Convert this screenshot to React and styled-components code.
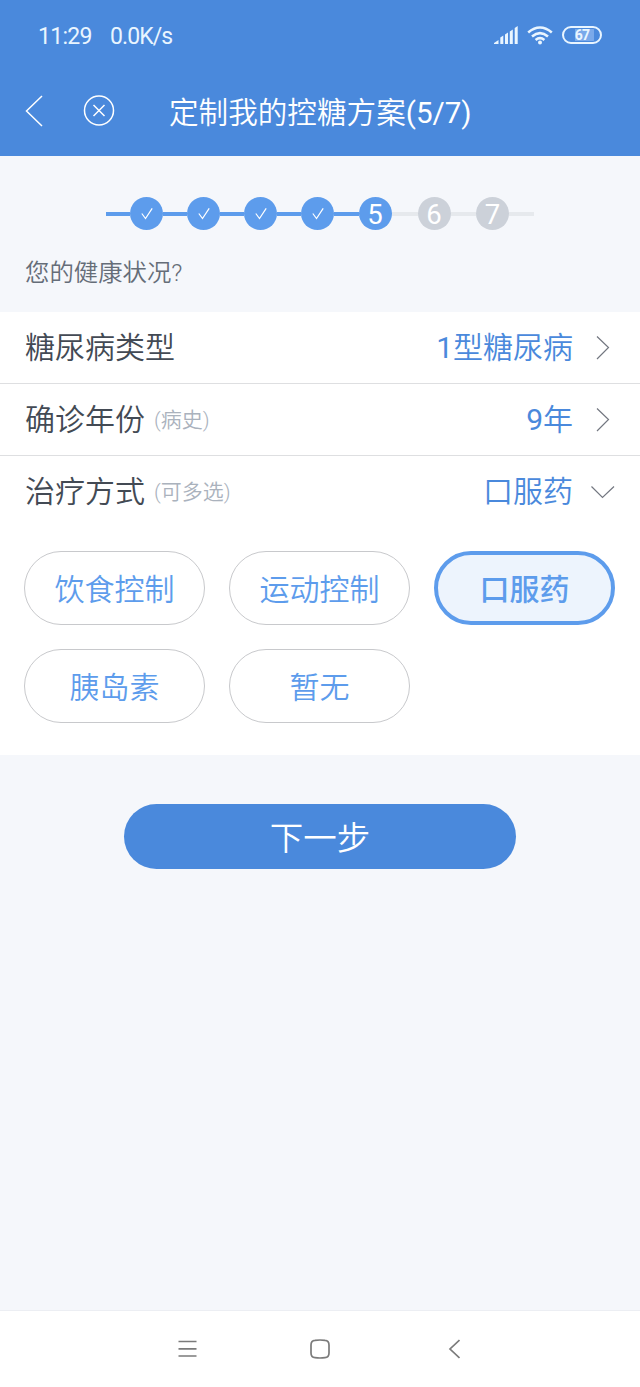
import React, { useState } from 'react';
import styled, { createGlobalStyle, css } from 'styled-components';

const GlobalStyle = createGlobalStyle`
    * {
        box-sizing: border-box;
    }
    body {
        margin: 0;
        background: #f5f7fb;
        font-family: Roboto, 'Noto Sans CJK SC', sans-serif;
        font-weight: 350;
    }
    button {
        padding: 0;
        border: none;
        background: none;
        font: inherit;
        color: inherit;
    }
    svg {
        display: block;
        flex-shrink: 0;
    }
`;

const Page = styled.div`
    display: flex;
    flex-direction: column;
    width: 640px;
    height: 1387px;
    background: #f5f7fb;
`;

const Top = styled.header`
    height: 156px;
    background: #4a89dc;
    color: #fff;
`;

const StatusBar = styled.div`
    display: flex;
    align-items: center;
    height: 70px;
    padding: 0 38px;
    font-size: 23px;
    font-weight: 400;
    letter-spacing: -0.9px;
    color: #e9f5ff;
`;

const Clock = styled.span`
    width: 72px;
    padding-top: 3px;
    letter-spacing: -0.7px;
    line-height: 28px;
`;

const Speed = styled.span`
    flex: 1;
    padding-top: 3px;
    line-height: 28px;
`;

const StatusIcons = styled.div`
    display: flex;
    align-items: center;
    gap: 9px;
    height: 24px;
`;

const Battery = styled.div`
    display: flex;
    align-items: center;
    justify-content: center;
    width: 40px;
    height: 18px;
    border: 2px solid #e9f5ff;
    border-radius: 9px;
    background: linear-gradient(90deg, #4a89dc 0 30%, #7aa9ea 30% 86%, #4a89dc 86%) content-box;
    padding: 1px;
    font-size: 14px;
    font-weight: 700;
    letter-spacing: -0.8px;
    line-height: 14px;
`;

const TitleBar = styled.div`
    display: flex;
    align-items: center;
    height: 82px;
    padding-left: 25px;
`;

const CloseButton = styled.button`
    margin-left: 40px;
`;

const Title = styled.h1`
    margin: 4px 0 0 54px;
    font-size: 29.6px;
    font-weight: 350;
    line-height: 40px;
    white-space: nowrap;
`;

const Digits = styled.span`
    font-weight: 400;
`;

const Steps = styled.div`
    display: flex;
    align-items: center;
    height: 33px;
    margin: 41px 0 0 106px;
`;

const Line = styled.span`
    width: ${(props) => props.$width}px;
    height: 4px;
    background: ${(props) => (props.$active ? '#5d9cec' : '#e6e9ed')};
`;

const Dot = styled.span`
    display: flex;
    align-items: center;
    justify-content: center;
    width: 33px;
    height: 33px;
    padding-top: 1px;
    border-radius: 50%;
    background: ${(props) => (props.$active ? '#5d9cec' : '#ccd1d9')};
    color: #fff;
    font-size: 27.5px;
    font-weight: 400;
    line-height: 33px;
`;

const Question = styled.p`
    height: 36px;
    margin: 25px 0 0 25px;
    font-size: 24.4px;
    line-height: 36px;
    color: #656d78;
`;

const Panel = styled.section`
    height: 443px;
    margin-top: 21px;
    background: #fff;
`;

const Row = styled.div`
    display: flex;
    align-items: center;
    height: ${(props) => props.$height}px;
    padding: 0 25px 0 25px;
    border-bottom: ${(props) => (props.$last ? 'none' : '1px solid #dedfe1')};
    font-size: 30px;
    line-height: 44px;
`;

const Label = styled.span`
    color: #434a54;
`;

const Hint = styled.span`
    margin-left: 9px;
    font-size: 21px;
    color: #aab2bd;
`;

const Value = styled.span`
    margin-left: auto;
    margin-right: 17px;
    color: #4a89dc;
`;

const Options = styled.div`
    display: grid;
    grid-template-columns: repeat(3, 181px);
    grid-auto-rows: 74px;
    gap: 24px;
    padding: 24px 24px 0;
`;

const Option = styled.button`
    padding-top: 3px;
    border: 1px solid #c8c9cc;
    border-radius: 37px;
    font-size: 30px;
    line-height: 44px;
    color: #5d9cec;
    ${(props) =>
        props.$selected &&
        css`
            border: 4px solid #5d9cec;
            background: #edf4fd;
            font-weight: 500;
        `}
`;

const NextButton = styled.button`
    align-self: center;
    width: 392px;
    height: 65px;
    margin-top: 49px;
    padding-top: 5px;
    border-radius: 33px;
    background: #4a89dc;
    color: #fff;
    font-size: 33.5px;
    line-height: 48px;
`;

const NavBar = styled.nav`
    display: flex;
    justify-content: center;
    height: 77px;
    margin-top: auto;
    border-top: 1px solid #eceef3;
    background: #fff;
`;

const NavItem = styled.button`
    display: flex;
    align-items: center;
    justify-content: center;
    width: 133px;
`;

const steps = [
    { id: 1, line: 24 },
    { id: 2, line: 24 },
    { id: 3, line: 24 },
    { id: 4, line: 24.5 },
    { id: 5, line: 26 },
    { id: 6, line: 25.5 },
    { id: 7, line: 25 },
];

const treatments = ['饮食控制', '运动控制', '口服药', '胰岛素', '暂无'];

function SignalIcon() {
    return (
        <svg width="24" height="18" viewBox="0 0 24 18" fill="#e9f5ff">
            <path d="M0 18v-1L4.500 14v4zM6.300 11.500l3-2V18h-3zM11 8.500l3-2V18h-3zM15.800 5.500l3-2V18h-3zM20.700 2l3-2V18h-3z" />
        </svg>
    );
}

function WifiIcon() {
    return (
        <svg width="26" height="19" viewBox="0 0 26 19" fill="none" stroke="#e9f5ff" strokeWidth="2.600">
            <path d="M1.200 6.500Q13-3.500 24.800 6.500M5 10.400Q13 3.800 21 10.400M8.600 14Q13 10.400 17.400 14" />
            <circle cx="13" cy="16.500" r="2" fill="#e9f5ff" stroke="none" />
        </svg>
    );
}

function Chevron({ down }) {
    return (
        <svg width="25" height="24" viewBox="0 0 25 24" fill="none" stroke="#737780" strokeWidth="1.200">
            <path d={down ? 'M1.500 6.500L12.500 17.500 24 6.500' : 'M7 .5L18.500 11.500 7 23'} />
        </svg>
    );
}

function CheckIcon() {
    return (
        <svg width="12" height="12" viewBox="0 0 12 12" fill="none" stroke="#fff" strokeWidth="1.200">
            <path d="M.8 5.500L4.500 10.500 11.200 .3" />
        </svg>
    );
}

function App() {
    const current = 5;
    const [selected, setSelected] = useState(['口服药']);

    const toggle = (name) => {
        setSelected(selected.includes(name) ? selected.filter((item) => item !== name) : [...selected, name]);
    };

    return (
        <Page>
            <GlobalStyle />
            <Top>
                <StatusBar>
                    <Clock>11:29</Clock>
                    <Speed>0.0K/s</Speed>
                    <StatusIcons>
                        <SignalIcon />
                        <WifiIcon />
                        <Battery>67</Battery>
                    </StatusIcons>
                </StatusBar>
                <TitleBar>
                    <button aria-label="返回">
                        <svg width="18" height="32" viewBox="0 0 18 32" fill="none" stroke="#fff" strokeWidth="1.500">
                            <path d="M17 1L1.500 16 17 31" />
                        </svg>
                    </button>
                    <CloseButton aria-label="关闭">
                        <svg width="32" height="32" viewBox="0 0 32 32" fill="none" stroke="#fff" strokeWidth="1.500">
                            <circle cx="16" cy="15.500" r="14.500" />
                            <path d="M10.500 10l11 11M21.500 10l-11 11" />
                        </svg>
                    </CloseButton>
                    <Title>
                        定制我的控糖方案<Digits>(5/7)</Digits>
                    </Title>
                </TitleBar>
            </Top>

            <Steps>
                <Line $width={24} $active />
                {steps.map((step) => (
                    <React.Fragment key={step.id}>
                        <Dot $active={step.id <= current}>{step.id < current ? <CheckIcon /> : step.id}</Dot>
                        <Line $width={step.line} $active={step.id < current} />
                    </React.Fragment>
                ))}
            </Steps>
            <Question>您的健康状况?</Question>

            <Panel>
                <Row $height={72}>
                    <Label>糖尿病类型</Label>
                    <Value>
                        <Digits>1</Digits>型糖尿病
                    </Value>
                    <Chevron />
                </Row>
                <Row $height={72}>
                    <Label>确诊年份</Label>
                    <Hint>(病史)</Hint>
                    <Value>
                        <Digits>9</Digits>年
                    </Value>
                    <Chevron />
                </Row>
                <Row $height={71} $last>
                    <Label>治疗方式</Label>
                    <Hint>(可多选)</Hint>
                    <Value>口服药</Value>
                    <Chevron down />
                </Row>
                <Options>
                    {treatments.map((name) => (
                        <Option key={name} $selected={selected.includes(name)} onClick={() => toggle(name)}>
                            {name}
                        </Option>
                    ))}
                </Options>
            </Panel>

            <NextButton>下一步</NextButton>

            <NavBar>
                <NavItem aria-label="菜单">
                    <svg width="19" height="20" viewBox="0 0 19 20" fill="none" stroke="#7b7b7b" strokeWidth="1.700">
                        <path d="M.5 2.500h18M.5 9.800h18M.5 17h18" />
                    </svg>
                </NavItem>
                <NavItem aria-label="主页">
                    <svg width="20" height="20" viewBox="0 0 20 20" fill="none" stroke="#7b7b7b" strokeWidth="1.700">
                        <path d="M1 6Q1 1.500 5 1.300Q10 .7 15 1.300Q19 1.500 19 6V14Q19 18.500 15 18.700Q10 19.300 5 18.700Q1 18.500 1 14Z" />
                    </svg>
                </NavItem>
                <NavItem aria-label="返回">
                    <svg width="14" height="20" viewBox="0 0 14 20" fill="none" stroke="#7b7b7b" strokeWidth="1.700">
                        <path d="M13.500 1L4 10l9.500 9" />
                    </svg>
                </NavItem>
            </NavBar>
        </Page>
    );
}

export default App;
